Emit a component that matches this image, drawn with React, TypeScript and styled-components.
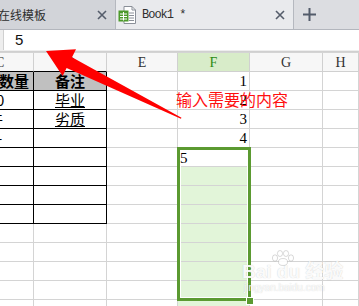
import React from "react";
import styled, { createGlobalStyle } from "styled-components";

const GlobalStyle = createGlobalStyle`
  html, body { margin: 0; padding: 0; background: #ffffff; }
  body { width: 359px; height: 306px; overflow: hidden; font-family: "Liberation Serif", "Noto Sans CJK SC", serif; }
  #root { width: 359px; height: 306px; }
`;

const Page = styled.div`
  position: relative;
  width: 359px;
  height: 306px;
  overflow: hidden;
  background: #ffffff;
`;

const TabBar = styled.div`
  display: flex;
  height: 29px;
  border-bottom: 1px solid #b3b6bd;
  background: #dcdde1;
`;

const Tab = styled.div<{ $active?: boolean; $w: number }>`
  display: flex;
  align-items: center;
  width: ${(p) => p.$w}px;
  flex: none;
  box-sizing: border-box;
  background: ${(p) => (p.$active ? "#e9eaed" : "#d2d4d9")};
  border-right: 1px solid #b5b8bf;
  padding: 0 8px 0 ${(p) => (p.$active ? 2 : 0)}px;
  gap: 6px;
`;

const TabLabel = styled.span<{ $cjk?: boolean; $indent?: number }>`
  flex: 1;
  margin-left: ${(p) => p.$indent ?? 0}px;
  font-family: ${(p) => (p.$cjk ? `"Noto Sans CJK SC", sans-serif` : `"Liberation Mono", monospace`)};
  font-size: 12px;
  letter-spacing: ${(p) => (p.$cjk ? 0 : -1)}px;
  color: #2e2e2e;
  white-space: nowrap;
`;

const PlusArea = styled.div`
  display: flex;
  align-items: center;
  padding-left: 9px;
  flex: 1;
`;

const FormulaBar = styled.div`
  height: 21px;
  padding-left: 3px;
  background: #eeeeee;
  border-bottom: 1px solid #d0d0d0;
`;

const FormulaInput = styled.div`
  height: 20px;
  box-sizing: border-box;
  background: #ffffff;
  border-left: 1px solid #d0d0d0;
  padding-left: 11px;
  font-family: "Liberation Sans", sans-serif;
  font-size: 15px;
  line-height: 20px;
  color: #111;
`;

const Grid = styled.div`
  position: relative;
  display: grid;
  grid-template-columns: 34px 73px 71px 72px 73px 1fr;
  grid-auto-rows: 19px;
  border-top: 1px solid #d4d4d4;
`;

const ColHead = styled.div<{ $sel?: boolean; $black?: boolean; $shift?: number }>`
  box-sizing: border-box;
  border-right: 1px solid #d0d0d0;
  border-bottom: 1px solid ${(p) => (p.$black ? "#000" : "#d0d0d0")};
  background: ${(p) => (p.$sel ? "#d8ecc9" : "#f7f7f7")};
  color: ${(p) => (p.$sel ? "#2a8a12" : "#333")};
  font-family: "Liberation Serif", serif;
  font-size: 14px;
  text-align: ${(p) => (p.$shift !== undefined ? "left" : "center")};
  text-indent: ${(p) => p.$shift ?? 0}px;
  line-height: 20px;
  overflow: hidden;
`;

const Cell = styled.div<{
  $table?: boolean;
  $head?: boolean;
  $align?: "left" | "right" | "center";
  $indent?: number;
  $fill?: boolean;
}>`
  box-sizing: border-box;
  border-right: 1px solid ${(p) => (p.$table ? "#000" : "#d4d4d4")};
  border-bottom: 1px solid ${(p) => (p.$table ? "#000" : "#d4d4d4")};
  background: ${(p) => (p.$head ? "#c0c0c0" : p.$fill ? "#e2f5d9" : "transparent")};
  font-family: ${(p) => (p.$table ? `"Noto Sans CJK SC", sans-serif` : `"Liberation Serif", serif`)};
  font-weight: ${(p) => (p.$head ? 700 : 400)};
  font-size: 15px;
  line-height: 18px;
  text-align: ${(p) => p.$align ?? "left"};
  padding: 0 ${(p) => (p.$align === "right" ? 2 : 0)}px 0 0;
  text-indent: ${(p) => p.$indent ?? 0}px;
  color: #000;
  white-space: nowrap;
  overflow: hidden;
`;

const Underlined = styled.span`
  text-decoration: underline;
  text-underline-offset: 1px;
`;

const Selection = styled.div`
  position: absolute;
  left: 177px;
  top: 94px;
  width: 74px;
  height: 154px;
  box-sizing: border-box;
  border: 3px solid #5b9a31;
  box-shadow: inset 0 0 0 1px #ffffff;
  pointer-events: none;
`;

const ActiveCell = styled.div`
  height: 16px;
  background: #ffffff;
  font-family: "Liberation Serif", serif;
  font-size: 15px;
  line-height: 17px;
  color: #000;
`;

const FillHandle = styled.div`
  position: absolute;
  left: 246px;
  top: 244px;
  width: 6px;
  height: 6px;
  background: #5b9a31;
  border: 1px solid #ffffff;
`;

const Note = styled.div`
  position: absolute;
  left: 176px;
  top: 89px;
  font-family: "Noto Sans CJK SC", sans-serif;
  font-size: 16px;
  line-height: 20px;
  color: #ff1010;
  white-space: nowrap;
`;

const Watermark = styled.div`
  position: absolute;
  left: 242px;
  top: 250px;
  display: flex;
  flex-direction: column;
  align-items: flex-start;
  color: rgba(255, 255, 255, 0.92);
  text-shadow: 0 0 1px rgba(120, 120, 120, 0.4);
  font-family: "Liberation Sans", "Noto Sans CJK SC", sans-serif;
  pointer-events: none;
`;

const WmTop = styled.span`
  font-size: 19px;
  font-weight: 700;
  line-height: 20px;
  margin-top: 12px;
`;

const WmBottom = styled.span`
  font-size: 10px;
  line-height: 12px;
  margin-left: 2px;
`;

const Paw = styled.svg`
  position: absolute;
  left: 28px;
  top: 0;
`;

const ArrowLayer = styled.svg`
  position: absolute;
  left: 0;
  top: 0;
  pointer-events: none;
`;

const CloseIcon = () => (
  <svg width="10" height="10" viewBox="0 0 10 10">
    <path d="M1 1 L9 9 M9 1 L1 9" stroke="#555d6b" strokeWidth="1.6" />
  </svg>
);

const PlusIcon = () => (
  <svg width="13" height="13" viewBox="0 0 13 13">
    <path d="M6.5 0 V13 M0 6.5 H13" stroke="#525b6a" strokeWidth="2" />
  </svg>
);

const SheetIcon = () => (
  <svg width="18" height="18" viewBox="0 0 18 18">
    <path d="M6 0.5 H14 L17.5 4 V17.5 H6 Z" fill="#ffffff" stroke="#8a8f98" />
    <path d="M14 0.5 V4 H17.5" fill="none" stroke="#8a8f98" />
    <path d="M11 7 H16 M11 9.5 H16 M11 12 H16 M11 14.5 H16" stroke="#8a8f98" />
    <rect x="0.5" y="4.5" width="10" height="11" fill="#4c9a2a" />
    <path d="M2 8 H9 M2 10.5 H9 M2 13 H9 M5.5 6 V14.5" stroke="#ffffff" strokeWidth="1" />
  </svg>
);

const cols = ["C", "D", "E", "F", "G", "H"];

type RowDef = { c: string; ci?: number; d?: string; f?: string };

const rows: RowDef[] = [
  { c: "数量", ci: -1, d: "备注", f: "1" },
  { c: "0", ci: -4, d: "毕业", f: "2" },
  { c: "件", ci: -12, d: "劣质", f: "3" },
  { c: "-", ci: -3, d: "", f: "4" },
  { c: "", d: "" },
  { c: "", d: "" },
  { c: "", d: "" },
  { c: "", d: "" },
  { c: "" },
  { c: "" },
  { c: "" },
  { c: "" },
  { c: "" },
];

export default function App() {
  return (
    <Page>
      <GlobalStyle />
      <TabBar>
        <Tab $w={116}>
          <TabLabel $cjk $indent={-2}>在线模板</TabLabel>
          <CloseIcon />
        </Tab>
        <Tab $active $w={178}>
          <SheetIcon />
          <TabLabel>Book1 *</TabLabel>
          <CloseIcon />
        </Tab>
        <PlusArea>
          <PlusIcon />
        </PlusArea>
      </TabBar>
      <FormulaBar>
        <FormulaInput>5</FormulaInput>
      </FormulaBar>
      <Grid>
        {cols.map((c) => (
          <ColHead
            key={c}
            $sel={c === "F"}
            $black={c === "C" || c === "D"}
            $shift={c === "C" ? -5 : undefined}
          >
            {c}
          </ColHead>
        ))}
        {rows.map((r, i) => {
          const inTable = i <= 7;
          const isHead = i === 0;
          const fill = i >= 5 && i <= 12;
          return (
            <React.Fragment key={i}>
              <Cell $table={inTable} $head={isHead} $indent={r.ci ?? 0}>
                {r.c}
              </Cell>
              <Cell $table={inTable} $head={isHead} $align="center">
                {i === 1 || i === 2 ? <Underlined>{r.d}</Underlined> : r.d}
              </Cell>
              <Cell />
              <Cell $align="right" $fill={fill}>
                {r.f}
              </Cell>
              <Cell />
              <Cell />
            </React.Fragment>
          );
        })}
        <Selection>
          <ActiveCell>5</ActiveCell>
        </Selection>
        <FillHandle />
      </Grid>
      <Note>输入需要的内容</Note>
      <Watermark>
        <Paw width="26" height="16" viewBox="0 0 26 16">
          <g fill="rgba(255,255,255,0.9)" stroke="rgba(120,120,120,0.35)" strokeWidth="0.8">
            <ellipse cx="5" cy="8" rx="2.6" ry="3.2" />
            <ellipse cx="10" cy="3.5" rx="2.6" ry="3" />
            <ellipse cx="16" cy="3.5" rx="2.6" ry="3" />
            <ellipse cx="21" cy="8" rx="2.6" ry="3.2" />
            <ellipse cx="13" cy="12" rx="4.5" ry="3.5" />
          </g>
        </Paw>
        <WmTop>Bai du 经验</WmTop>
        <WmBottom>jingyan.baidu.com</WmBottom>
      </Watermark>
      <ArrowLayer width="359" height="306" viewBox="0 0 359 306">
        <polygon
          points="46,51 76,49.2 72,57.2 181.5,117.7 180.9,118.7 66.6,68 62.6,76"
          fill="#ff0000"
        />
      </ArrowLayer>
    </Page>
  );
}
